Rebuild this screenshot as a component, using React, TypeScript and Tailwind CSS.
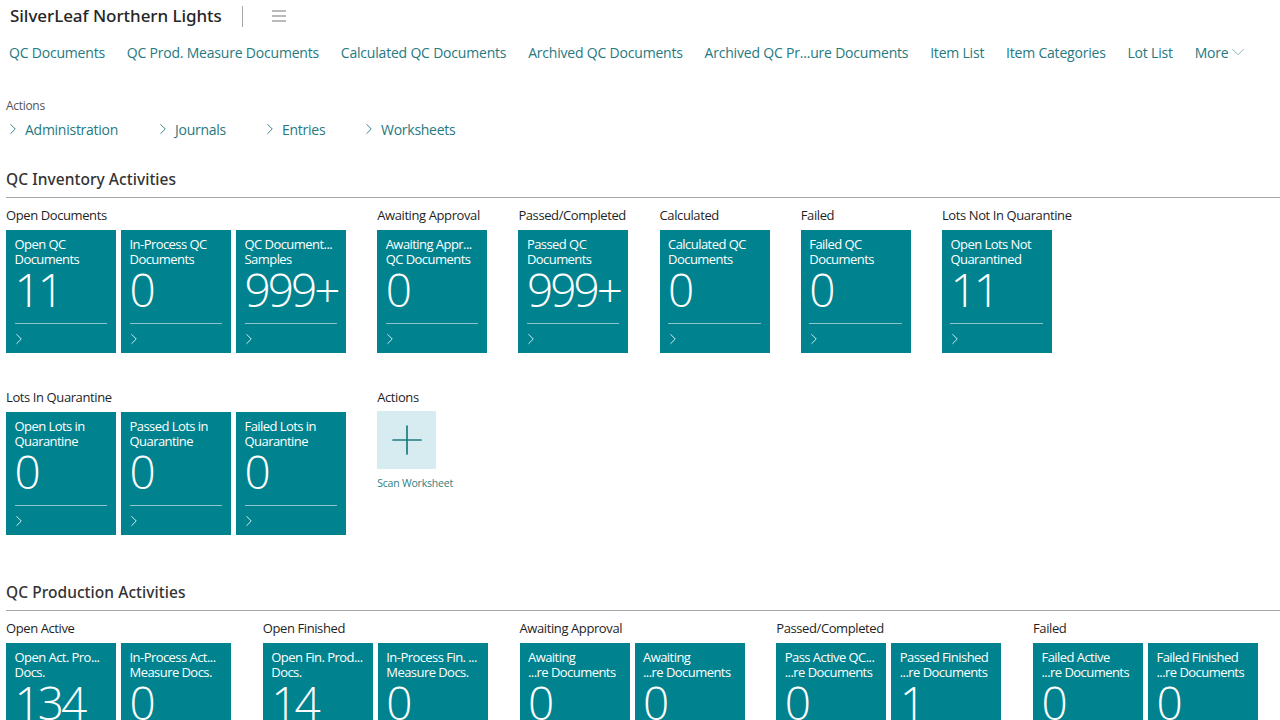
import { ChevronRight, ChevronDown, Plus } from "lucide-react"

const navLinks = [
  "QC Documents",
  "QC Prod. Measure Documents",
  "Calculated QC Documents",
  "Archived QC Documents",
  "Archived QC Pr...ure Documents",
  "Item List",
  "Item Categories",
  "Lot List",
]

type TileData = { l1: string; l2: string; value: string }
type Group = { title: string; tiles: TileData[] }

const inventoryRow1: Group[] = [
  {
    title: "Open Documents",
    tiles: [
      { l1: "Open QC", l2: "Documents", value: "11" },
      { l1: "In-Process QC", l2: "Documents", value: "0" },
      { l1: "QC Document...", l2: "Samples", value: "999+" },
    ],
  },
  { title: "Awaiting Approval", tiles: [{ l1: "Awaiting Appr...", l2: "QC Documents", value: "0" }] },
  { title: "Passed/Completed", tiles: [{ l1: "Passed QC", l2: "Documents", value: "999+" }] },
  { title: "Calculated", tiles: [{ l1: "Calculated QC", l2: "Documents", value: "0" }] },
  { title: "Failed", tiles: [{ l1: "Failed QC", l2: "Documents", value: "0" }] },
  { title: "Lots Not In Quarantine", tiles: [{ l1: "Open Lots Not", l2: "Quarantined", value: "11" }] },
]

const lotsInQuarantine: Group = {
  title: "Lots In Quarantine",
  tiles: [
    { l1: "Open Lots in", l2: "Quarantine", value: "0" },
    { l1: "Passed Lots in", l2: "Quarantine", value: "0" },
    { l1: "Failed Lots in", l2: "Quarantine", value: "0" },
  ],
}

const production: Group[] = [
  {
    title: "Open Active",
    tiles: [
      { l1: "Open Act. Pro...", l2: "Docs.", value: "134" },
      { l1: "In-Process Act...", l2: "Measure Docs.", value: "0" },
    ],
  },
  {
    title: "Open Finished",
    tiles: [
      { l1: "Open Fin. Prod...", l2: "Docs.", value: "14" },
      { l1: "In-Process Fin. ...", l2: "Measure Docs.", value: "0" },
    ],
  },
  {
    title: "Awaiting Approval",
    tiles: [
      { l1: "Awaiting", l2: "...re Documents", value: "0" },
      { l1: "Awaiting", l2: "...re Documents", value: "0" },
    ],
  },
  {
    title: "Passed/Completed",
    tiles: [
      { l1: "Pass Active QC...", l2: "...re Documents", value: "0" },
      { l1: "Passed Finished", l2: "...re Documents", value: "1" },
    ],
  },
  {
    title: "Failed",
    tiles: [
      { l1: "Failed Active", l2: "...re Documents", value: "0" },
      { l1: "Failed Finished", l2: "...re Documents", value: "0" },
    ],
  },
]

function Tile({ tile }: { tile: TileData }) {
  return (
    <div className="w-[110px] h-[123px] shrink-0 bg-[#00838f] text-white pl-[8.5px] pr-[9px] pt-[7px] overflow-hidden">
      <div className="text-[13px] leading-[15px] tracking-[-0.55px] whitespace-nowrap">{tile.l1}</div>
      <div className="text-[13px] leading-[15px] tracking-[-0.55px] whitespace-nowrap">{tile.l2}</div>
      <div className="text-[46px] leading-[46px] font-light tracking-[-3px] h-[46px] -mt-[1px] whitespace-nowrap">{tile.value}</div>
      <div className="h-[1.5px] bg-[#8cc6cc] mt-[10.5px]" />
      <ChevronRight className="w-[18px] h-[18px] -ml-[4.5px] mt-[6px] text-[#d8eef0]" strokeWidth={1.3} />
    </div>
  )
}

function TileGroup({ group }: { group: Group }) {
  return (
    <div>
      <div className="text-[13px] leading-[18px] tracking-[-0.4px] text-[#1f1f1f] mb-[6px] whitespace-nowrap">{group.title}</div>
      <div className="flex gap-[5px]">
        {group.tiles.map((t, i) => (
          <Tile key={i} tile={t} />
        ))}
      </div>
    </div>
  )
}

function SectionTitle({ title }: { title: string }) {
  return (
    <div className="border-b-[1.5px] border-[#a3a9ac] h-[31px]">
      <span className="font-['Noto_Sans'] text-[15.5px] leading-[22px] font-medium tracking-[0.05px] text-[#333]">{title}</span>
    </div>
  )
}

function ActionLink({ label, width }: { label: string; width: string }) {
  return (
    <span className={`flex items-center ${width}`}>
      <ChevronRight className="w-[18px] h-[18px] -ml-[2px] mr-[3px] text-[#26797f]" strokeWidth={1.2} />
      {label}
    </span>
  )
}

export default function App() {
  return (
    <div
      className="w-[1280px] h-[720px] overflow-hidden bg-white"
      style={{ fontFamily: '"Open Sans", "Noto Sans", sans-serif' }}
    >
      <div className="flex items-center h-[32px] pl-[10px]">
        <span className="font-['Noto_Sans'] text-[17px] font-medium tracking-[-0.05px] text-[#262626] whitespace-nowrap">SilverLeaf Northern Lights</span>
        <div className="w-px h-[21px] bg-[#a8a8a8] ml-[20px]" />
        <svg className="ml-[29px]" width="14" height="12" viewBox="0 0 14 12" stroke="#777" strokeWidth="1">
          <path d="M0 1h14M0 6h14M0 11h14" />
        </svg>
      </div>

      <div className="flex items-center h-[20px] mt-[10px] pl-[9px] gap-[21.85px] text-[14px] tracking-[-0.2px] text-[#26797f]">
        {navLinks.map((n) => (
          <span key={n} className="whitespace-nowrap">{n}</span>
        ))}
        <span className="flex items-center whitespace-nowrap">
          More
          <ChevronDown className="w-[22px] h-[22px] -ml-[1px] text-[#7aa]" strokeWidth={0.9} />
        </span>
      </div>

      <div className="pl-[6px]">
        <div className="text-[12px] leading-[16px] tracking-[-0.3px] text-[#555] mt-[36px]">Actions</div>
        <div className="flex items-center h-[20px] mt-[5px] text-[14px] tracking-[-0.26px] text-[#26797f]">
          <ActionLink label="Administration" width="w-[150px]" />
          <ActionLink label="Journals" width="w-[107px]" />
          <ActionLink label="Entries" width="w-[99px]" />
          <ActionLink label="Worksheets" width="" />
        </div>

        <div className="mt-[28px]">
          <SectionTitle title="QC Inventory Activities" />
        </div>

        <div className="flex gap-[31.2px] mt-[8px]">
          {inventoryRow1.map((g) => (
            <TileGroup key={g.title} group={g} />
          ))}
        </div>

        <div className="flex gap-[31.2px] mt-[35px]">
          <TileGroup group={lotsInQuarantine} />
          <div>
            <div className="text-[13px] leading-[18px] tracking-[-0.4px] text-[#1f1f1f] mb-[5px]">Actions</div>
            <div className="w-[59px] h-[58px] bg-[#d6ecf0] flex items-center justify-center">
              <Plus className="w-[48px] h-[48px] text-[#1f7a80]" strokeWidth={0.85} />
            </div>
            <div className="text-[10.5px] leading-[14px] tracking-[-0.2px] text-[#2f7f86] mt-[7px] whitespace-nowrap">Scan Worksheet</div>
          </div>
        </div>

        <div className="mt-[45px]">
          <SectionTitle title="QC Production Activities" />
        </div>

        <div className="flex gap-[31.75px] mt-[8px]">
          {production.map((g) => (
            <TileGroup key={g.title} group={g} />
          ))}
        </div>
      </div>
    </div>
  )
}
